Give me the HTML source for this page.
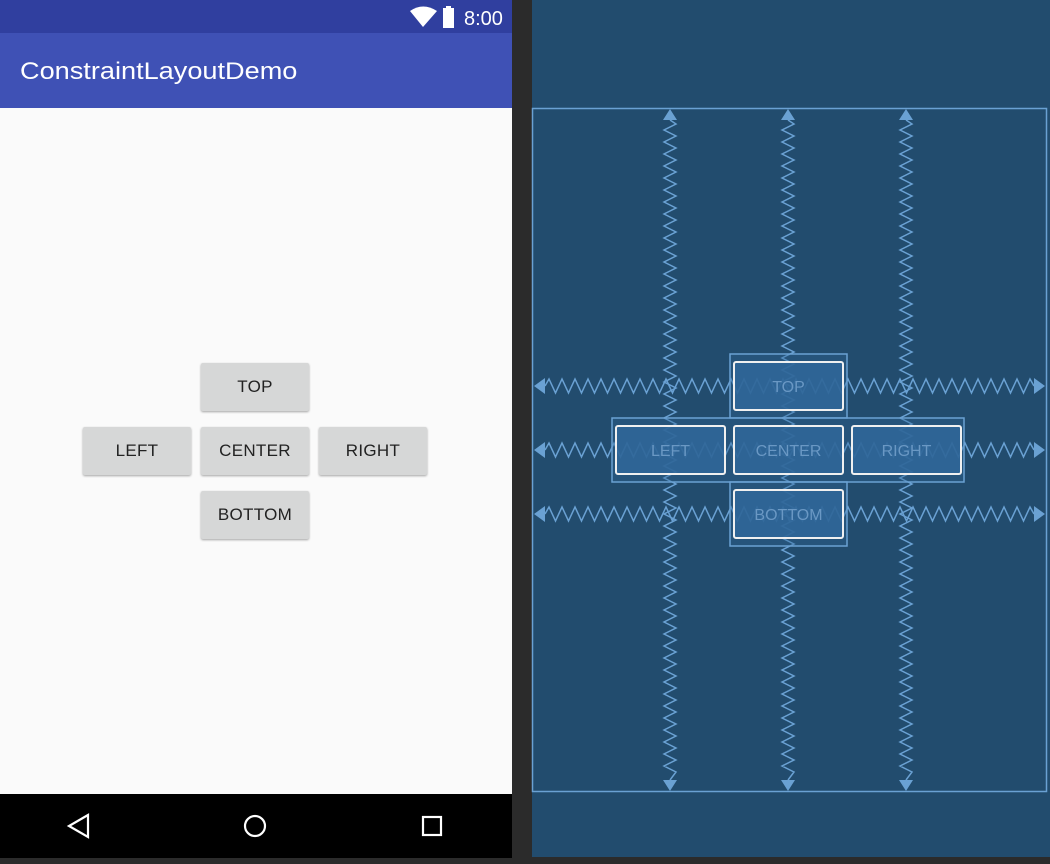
<!DOCTYPE html><html><head><style>
body{margin:0;width:1050px;height:864px;background:#2b2b2b;position:relative;overflow:hidden;font-family:"Liberation Sans",sans-serif}
.a{position:absolute}
.btn{position:absolute;width:108px;height:48px;background:#d6d7d7;border-radius:2px;box-shadow:0 1px 2px rgba(0,0,0,.35);font-size:17px;color:#222;display:flex;align-items:center;justify-content:center;letter-spacing:.3px}
</style></head><body>
<div class="a" style="left:0;top:0;width:512px;height:33px;background:#303f9f"></div>
<div class="a" style="left:0;top:33px;width:512px;height:75px;background:#3f51b5"></div>
<div class="a" style="left:20px;top:58px;color:#fff;font-size:24px;transform:scaleX(1.13);transform-origin:left top">ConstraintLayoutDemo</div>
<div class="a" style="left:464px;top:8px;color:#fff;font-size:20px">8:00</div>
<svg class="a" style="left:408px;top:5px" width="50" height="24"><path d="M2 6 Q15 -3 29 6 L15 22 Z" fill="#fff"/><rect x="35" y="3" width="11" height="20" fill="#fff"/><rect x="38" y="1" width="5" height="3" fill="#fff"/></svg>
<div class="a" style="left:0;top:108px;width:512px;height:686px;background:#fafafa"></div>
<div class="btn" style="left:201px;top:363px">TOP</div>
<div class="btn" style="left:83px;top:427px">LEFT</div>
<div class="btn" style="left:201px;top:427px">CENTER</div>
<div class="btn" style="left:319px;top:427px">RIGHT</div>
<div class="btn" style="left:201px;top:491px">BOTTOM</div>
<div class="a" style="left:0;top:794px;width:512px;height:64px;background:#000"></div>
<svg class="a" style="left:0;top:794px" width="512" height="64"><path d="M88 21 L69 32 L88 43 Z" fill="none" stroke="#fff" stroke-width="2.2"/><circle cx="255" cy="32" r="10" fill="none" stroke="#fff" stroke-width="2.2"/><rect x="423" y="23" width="18" height="18" fill="none" stroke="#fff" stroke-width="2.2"/></svg>
<div class="a" style="left:532px;top:0;width:518px;height:857px;background:#224c6e"></div>
<svg class="a" id="bp" style="left:0;top:0" width="1050" height="864"></svg>
<script>
var s=document.getElementById('bp'),h='',c='#6aa1d3';
h+='<rect x="532.5" y="108.5" width="514" height="683" fill="none" stroke="'+c+'" stroke-width="1.5"/>';
function zv(x,y1,y2){var p='M'+x+' '+y1,k=0;for(var y=y1+4;y<y2-2;y+=6){k++;p+=' L'+(x+(k%2?6:-6))+' '+y;}p+=' L'+x+' '+y2;return '<path d="'+p+'" fill="none" stroke="'+c+'" stroke-width="1.5"/>';}
function zh(y,x1,x2){var p='M'+x1+' '+y,k=0;for(var x=x1+4;x<x2-2;x+=6.5){k++;p+=' L'+x+' '+(y+(k%2?-7:7));}p+=' L'+x2+' '+y;return '<path d="'+p+'" fill="none" stroke="'+c+'" stroke-width="1.5"/>';}
[670,788,906].forEach(function(x){h+=zv(x,120,780);h+='<path d="M'+(x-7)+' 120 L'+x+' 109 L'+(x+7)+' 120Z M'+(x-7)+' 780 L'+x+' 791 L'+(x+7)+' 780Z" fill="'+c+'"/>';});
[386,450,514].forEach(function(y){h+=zh(y,545,1034);h+='<path d="M545 '+(y-8)+' L534 '+y+' L545 '+(y+8)+'Z M1034 '+(y-8)+' L1045 '+y+' L1034 '+(y+8)+'Z" fill="'+c+'"/>';});
function g(x,y,w,hh){h+='<rect x="'+x+'" y="'+y+'" width="'+w+'" height="'+hh+'" fill="rgba(46,100,150,0.35)" stroke="'+c+'" stroke-width="1.5"/>';}
g(730,354,117,64);g(612,418,352,64);g(730,482,117,64);
function b(x,y,t){h+='<rect x="'+x+'" y="'+y+'" width="109" height="48" rx="2" fill="rgba(48,103,152,0.88)" stroke="#f0f0f0" stroke-width="2"/><text x="'+(x+54.5)+'" y="'+(y+30)+'" text-anchor="middle" font-family="Liberation Sans" font-size="16" fill="#6a98c4">'+t+'</text>';}
b(734,362,'TOP');b(616,426,'LEFT');b(734,426,'CENTER');b(852,426,'RIGHT');b(734,490,'BOTTOM');
s.innerHTML=h;
</script>
</body></html>
